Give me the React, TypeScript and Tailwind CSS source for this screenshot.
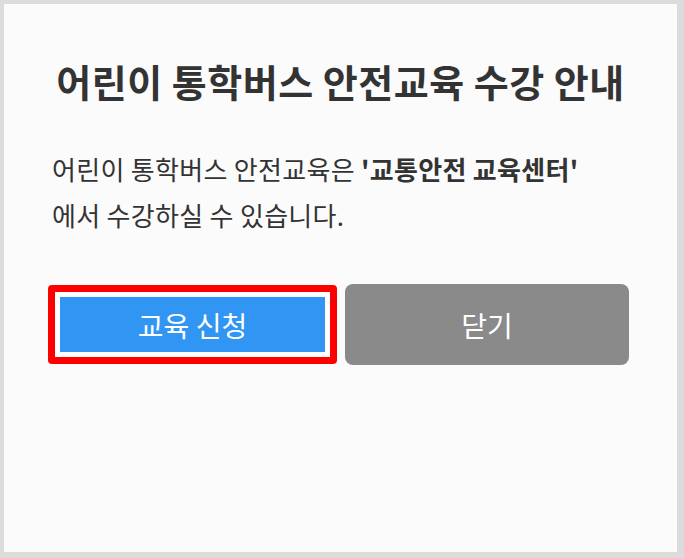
import React from 'react'

const font = { fontFamily: '"Noto Sans CJK KR", "Noto Sans", sans-serif' }

export default function App() {
  return (
    <div className="w-[684px] h-[558px] bg-[#dcdcdc] pt-[4px] pl-[4px]" style={font}>
      <div className="w-[673px] h-[548px] bg-[#fbfbfb] flex flex-col pt-[52px]">
        {/* Title */}
        <h1 className="text-center text-[38px] leading-[50px] tracking-[0.5px] font-bold text-[#333333]">
          어린이 통학버스 안전교육 수강 안내
        </h1>

        {/* Body */}
        <p className="mt-[40px] pl-[48px] text-[26px] leading-[46px] tracking-[0.3px] text-[#333333]">
          어린이 통학버스 안전교육은 <b className="font-bold">'교통안전 교육센터'</b>
          <br />
          에서 수강하실 수 있습니다.
        </p>

        {/* Buttons */}
        <div className="mt-[46px] pl-[44px] flex gap-[8px]">
          <div className="w-[289px] h-[79px] mt-[1px] rounded-[4px] bg-[#ff0000] p-[7px]">
            <div className="w-full h-full bg-white p-[5px]">
              <button className="w-full h-full bg-[#3195f3] text-white text-[28px]">
                교육 신청
              </button>
            </div>
          </div>
          <button className="w-[284px] h-[81px] rounded-[8px] bg-[#8a8a8a] text-white text-[28px]">
            닫기
          </button>
        </div>
      </div>
    </div>
  )
}
